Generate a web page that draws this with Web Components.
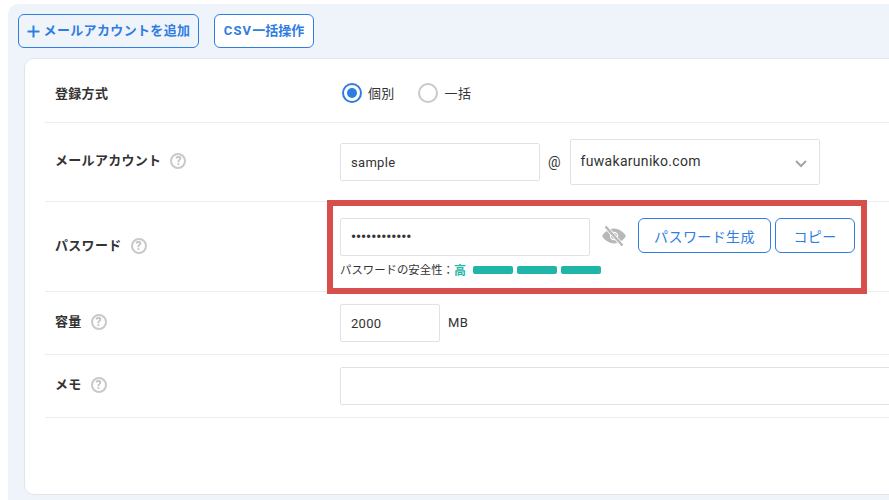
<!DOCTYPE html>
<html lang="ja">
<head>
<meta charset="utf-8">
<title>メールアカウント</title>
<style>
  html, body { margin: 0; height: 100%; overflow: hidden; background: #fff; }
  body { font-family: Roboto, "Noto Sans CJK JP", sans-serif; color: #333; }
</style>
</head>
<body>
<account-page>
  <action-button slot="actions" plus style="width:181px">メールアカウントを追加</action-button>
  <action-button slot="actions" style="width:100px;letter-spacing:0"><span style="letter-spacing:1.2px">CSV</span>一括操作</action-button>

  <form-row slot="rows" label="登録方式" pad="24px 0 19px" shift="8px 0 0">
    <radio-option checked>個別</radio-option>
    <radio-option>一括</radio-option>
  </form-row>

  <form-row slot="rows" label="メールアカウント" help pad="16px 0" shift="0 0 2px">
    <text-box width="200">sample</text-box>
    <at-mark>@</at-mark>
    <select-box>fuwakaruniko.com</select-box>
  </form-row>

  <form-row slot="rows" label="パスワード" help pad="16px 0 13px" shift="0 0 1px">
    <password-block></password-block>
  </form-row>

  <form-row slot="rows" label="容量" help pad="12px 0" shift="0 0 2px">
    <text-box width="100">2000</text-box>
    <at-mark unit>MB</at-mark>
  </form-row>

  <form-row slot="rows" label="メモ" help pad="12px 0" shift="0 0 2px">
    <text-box width="600"></text-box>
  </form-row>
</account-page>

<script>
// top level frame: tinted panel, action buttons, white card
class AccountPage extends HTMLElement {
  constructor() {
    super();
    this.attachShadow({ mode: "open" });
    this.shadowRoot.innerHTML = `
      <style>
        :host { display: block; padding: 4px 0 0 8px; height: 100vh; box-sizing: border-box; overflow: hidden; }
        .panel { background: #eff4fb; border-radius: 10px 0 0 0; padding: 10px 0 0 10px; height: 496px; box-sizing: border-box; overflow: hidden; }
        .actions { display: flex; gap: 15px; margin-bottom: 10px; }
        .card { width: 1000px; margin-left: 6px; background: #fff; border: 1px solid #e1e5ea; border-radius: 10px; padding: 0 20px; height: 437px; box-sizing: border-box; position: relative; }
        .mark { position: absolute; left: 302px; top: 141px; width: 528px; height: 82px; border: 6px solid #d64f4b; pointer-events: none; }
      </style>
      <div class="panel">
        <div class="actions"><slot name="actions"></slot></div>
        <div class="card">
          <slot name="rows"></slot>
          <div class="mark"></div>
        </div>
      </div>`;
  }
}

class ActionButton extends HTMLElement {
  constructor() {
    super();
    this.attachShadow({ mode: "open" });
    this.shadowRoot.innerHTML = `
      <style>
        :host { display: inline-flex; align-items: center; justify-content: center; height: 34px; box-sizing: border-box; border: 1px solid #2f7de1; border-radius: 6px; background: #fff; color: #2f7de1; font-size: 13px; font-weight: 700; letter-spacing: .35px; white-space: nowrap; flex: none; }
        :host([plus]) { background: transparent; }
        span { margin-bottom: 3px; }
        svg { display: none; width: 13px; height: 13px; margin-right: 4px; }
        :host([plus]) svg { display: block; }
      </style>
      <svg viewBox="0 0 13 13"><path d="M6.5 0.5v12M0.5 6.5h12" stroke="#2f7de1" stroke-width="2" fill="none"/></svg>
      <span><slot></slot></span>`;
  }
}

// one line of the form: label column + value column with bottom rule
class FormRow extends HTMLElement {
  constructor() {
    super();
    this.attachShadow({ mode: "open" });
    this.shadowRoot.innerHTML = `
      <style>
        :host { display: grid; grid-template-columns: 285px 1fr; align-items: center; padding-left: 10px; border-bottom: 1px solid #ebedef; }
        .label { display: flex; align-items: center; gap: 9px; font-size: 13px; font-weight: 700; letter-spacing: .3px; color: #333; }
        .text { margin-bottom: 4px; }
        .value { display: flex; align-items: center; }
        .help { width: 16px; height: 16px; box-sizing: border-box; border: 2px solid #c9c9c9; border-radius: 50%; color: #c0c0c0; font-size: 12px; font-weight: 700; letter-spacing: 0; display: none; align-items: center; justify-content: center; line-height: 1; }
        :host([help]) .help { display: flex; }
      </style>
      <div class="label"><span class="text"></span><span class="help">?</span></div>
      <div class="value"><slot></slot></div>`;
  }
  connectedCallback() {
    this.shadowRoot.querySelector(".text").textContent = this.getAttribute("label");
    this.shadowRoot.querySelector(".value").style.padding = this.getAttribute("pad");
    this.shadowRoot.querySelector(".label").style.margin = this.getAttribute("shift") || "0";
  }
}

class RadioOption extends HTMLElement {
  constructor() {
    super();
    this.attachShadow({ mode: "open" });
    this.shadowRoot.innerHTML = `
      <style>
        :host { display: inline-flex; align-items: center; gap: 6px; margin: 0 23px 0 2px; font-size: 13px; letter-spacing: .3px; color: #333; }
        :host(:not([checked])) { margin-left: 0; gap: 7px; }
        .dot { width: 20px; height: 20px; box-sizing: border-box; border: 2px solid #c9c9c9; border-radius: 50%; display: flex; align-items: center; justify-content: center; }
        :host([checked]) .dot { border-color: #2f7de1; }
        :host([checked]) .dot::after { content: ""; width: 10px; height: 10px; border-radius: 50%; background: #2f7de1; }
        span.t { margin-bottom: 1px; }
      </style>
      <span class="dot"></span><span class="t"><slot></slot></span>`;
  }
}

class TextBox extends HTMLElement {
  constructor() {
    super();
    this.attachShadow({ mode: "open" });
    this.shadowRoot.innerHTML = `
      <style>
        :host { display: flex; align-items: center; height: 38px; box-sizing: border-box; padding: 0 10px; border: 1px solid #e2e2e2; border-radius: 2px; background: #fff; font-size: 13px; letter-spacing: .3px; color: #333; flex: none; }
      </style>
      <slot></slot>`;
  }
  connectedCallback() {
    this.style.width = this.getAttribute("width") + "px";
  }
}

class AtMark extends HTMLElement {
  constructor() {
    super();
    this.attachShadow({ mode: "open" });
    this.shadowRoot.innerHTML = `
      <style>
        :host { display: block; margin: 0 9px 0 8px; font-size: 14px; color: #333; }
        :host([unit]) { font-size: 13px; letter-spacing: .3px; margin-bottom: 1px; }
      </style>
      <slot></slot>`;
  }
}

class SelectBox extends HTMLElement {
  constructor() {
    super();
    this.attachShadow({ mode: "open" });
    this.shadowRoot.innerHTML = `
      <style>
        :host { display: flex; align-items: center; justify-content: space-between; width: 250px; height: 46px; box-sizing: border-box; padding: 0 12px 2px 10px; border: 1px solid #e2e2e2; border-radius: 2px; font-size: 14px; letter-spacing: .3px; color: #333; flex: none; }
        svg { width: 12px; height: 8px; margin-top: 5px; }
      </style>
      <slot></slot>
      <svg viewBox="0 0 12 8"><path d="M1 1l5 5 5-5" fill="none" stroke="#a5a5a5" stroke-width="2"/></svg>`;
  }
}

// password input, eye toggle, generator buttons and strength meter
class PasswordBlock extends HTMLElement {
  constructor() {
    super();
    this.attachShadow({ mode: "open" });
    this.shadowRoot.innerHTML = `
      <style>
        :host { display: block; }
        .top { display: flex; align-items: flex-start; }
        .input { width: 250px; height: 38px; box-sizing: border-box; border: 1px solid #e2e2e2; border-radius: 2px; padding: 0 10px; display: flex; align-items: center; font-size: 14px; font-weight: 700; color: #333; }
        .eye { width: 24px; height: 20px; margin: 8px 12px 0; flex: none; }
        .btn { height: 35px; box-sizing: border-box; border: 1px solid #2f7de1; border-radius: 6px; color: #2f7de1; font-size: 14px; letter-spacing: .4px; display: flex; align-items: center; justify-content: center; }
        .gen { width: 133px; margin-right: 4px; }
        .copy { width: 80px; }
        .meter { display: flex; align-items: center; height: 16px; margin-top: 6px; font-size: 11.4px; color: #333; }
        .label { margin-bottom: 2px; }
        .high { color: #1fb5a8; margin: 0 7px 2px 0; font-size: 12px; font-weight: 700; }
        .bar { width: 40px; height: 8px; border-radius: 2px; background: #1fb5a8; margin-right: 4px; }
      </style>
      <div class="top">
        <div class="input">••••••••••••</div>
        <svg class="eye" viewBox="0 0 24 20">
          <path d="M12 2.500C6.500 2.500 2.300 6.500 0 10c2.300 3.500 6.500 7.500 12 7.500s9.700-4 12-7.500C21.700 6.500 17.500 2.500 12 2.500z" fill="#b8b8b8"/>
          <circle cx="12" cy="10" r="4.200" fill="#fff"/>
          <circle cx="12" cy="10" r="3" fill="#b8b8b8"/>
          <path d="M3.500 .5l17 19" stroke="#fff" stroke-width="4"/>
          <path d="M3.500 .5l17 19" stroke="#b8b8b8" stroke-width="2.400"/>
        </svg>
        <div class="btn gen">パスワード生成</div>
        <div class="btn copy">コピー</div>
      </div>
      <div class="meter">
        <span class="label">パスワードの安全性：</span><span class="high">高</span>
        <span class="bar"></span><span class="bar"></span><span class="bar"></span>
      </div>`;
  }
}

customElements.define("account-page", AccountPage);
customElements.define("action-button", ActionButton);
customElements.define("form-row", FormRow);
customElements.define("radio-option", RadioOption);
customElements.define("text-box", TextBox);
customElements.define("at-mark", AtMark);
customElements.define("select-box", SelectBox);
customElements.define("password-block", PasswordBlock);
</script>
</body>
</html>
